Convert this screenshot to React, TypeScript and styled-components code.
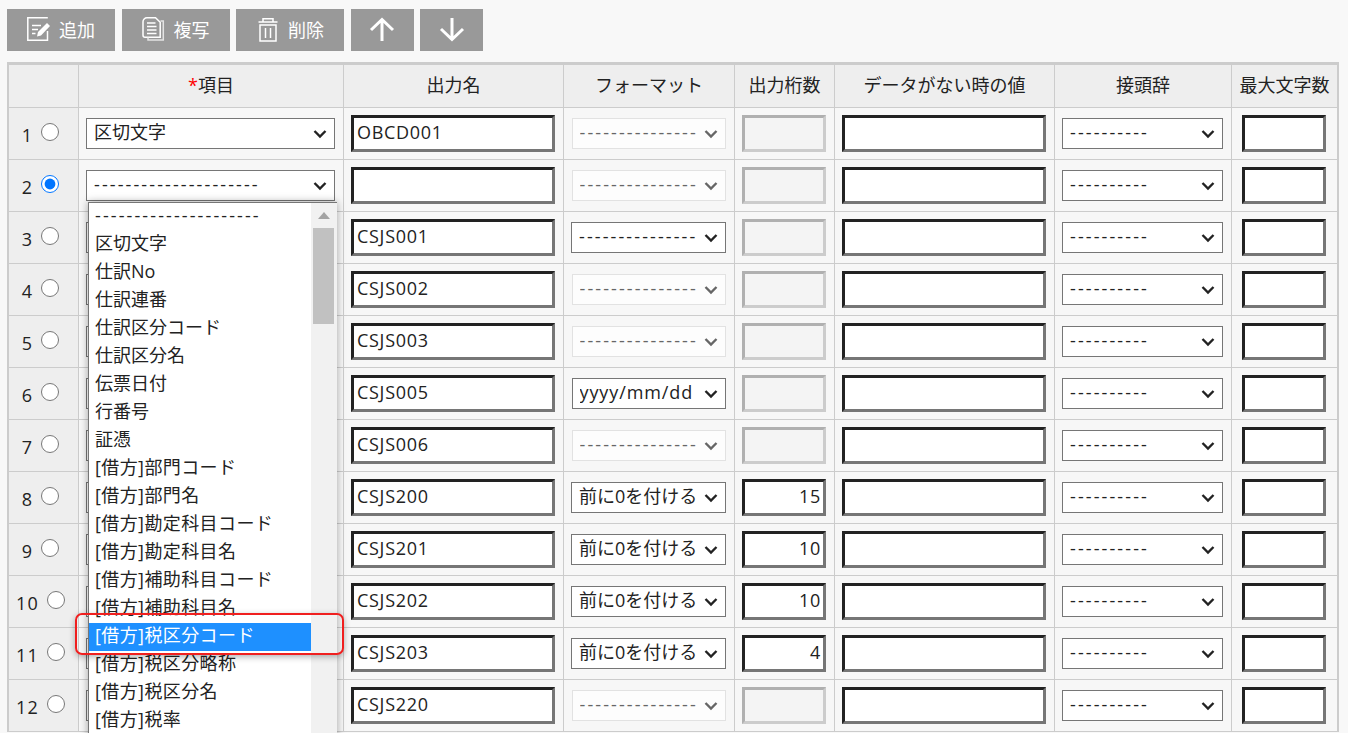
import React, { FC } from "react";
import styled, { createGlobalStyle } from "styled-components";

const FONT = `"Open Sans", "Noto Sans CJK JP", sans-serif`;

const chevron = (color: string) =>
  `url("data:image/svg+xml,%3Csvg xmlns='http://www.w3.org/2000/svg' width='14' height='10'%3E%3Cpath d='M1.500 2L7 7.500 12.500 2' fill='none' stroke='${color}' stroke-width='2.400'/%3E%3C/svg%3E")`;

const GlobalStyle = createGlobalStyle`
  html, body {
    margin: 0;
    height: 733px;
    overflow: hidden;
    background: #f8f8f8;
    font-family: ${FONT};
  }
`;

const Page = styled.div`
  position: relative;
  box-sizing: border-box;
  width: 1348px;
  height: 733px;
  padding: 9px 0 0 7px;
  overflow: hidden;
  color: #222;
  font-size: 18px;
`;

const Toolbar = styled.div`
  display: flex;
  gap: 6.5px;
  margin-bottom: 11px;
`;

const ToolButton = styled.button`
  display: flex;
  align-items: center;
  gap: 8px;
  width: 108px;
  height: 42px;
  padding: 0 0 0 20px;
  border: 0;
  background: #999;
  color: #fff;
  font-family: ${FONT};
  font-size: 18px;
`;

const ArrowButton = styled(ToolButton)`
  justify-content: center;
  width: 63px;
  padding: 0;
`;

const ButtonLabel = styled.span`
  position: relative;
  top: -1px;
`;

const Grid = styled.table`
  border-collapse: separate;
  border-spacing: 0;
  table-layout: fixed;
  width: 1332px;
  border-style: solid;
  border-color: #ccc;
  border-width: 3px 2px 0 2px;
`;

const Head = styled.th`
  height: 43px;
  padding: 0 0 5px;
  box-sizing: border-box;
  background: #eee;
  border-right: 1px solid #ccc;
  border-bottom: 1px solid #ccc;
  font-weight: 400;
  font-size: 18px;
  text-align: center;
  &:last-child {
    border-right: 0;
  }
`;

const Required = styled.span`
  color: #f00;
`;

const Cell = styled.td<{ $number?: boolean }>`
  height: 51px;
  padding: 0 1px 0 0;
  background: ${(p) => (p.$number ? "#eee" : "#f7f7f7")};
  border-right: 1px solid #ccc;
  border-bottom: 1px solid #ccc;
  &:last-child {
    border-right: 0;
  }
`;

const RowLabel = styled.label`
  display: flex;
  align-items: center;
  justify-content: center;
  gap: 8px;
  padding-right: 5px;
  line-height: 18px;
`;

const RowNumber = styled.span`
  padding-top: 3px;
  letter-spacing: 1.2px;
`;

const Radio = styled.input`
  width: 18px;
  height: 18px;
  margin: 0 0 3px;
`;

const Select = styled.select<{ $width: number; $spacing?: number }>`
  display: block;
  box-sizing: border-box;
  width: ${(p) => p.$width}px;
  height: 31px;
  margin: 0 auto;
  padding: 0 24px 3px 7px;
  appearance: none;
  background: #fff ${chevron("%23222")} no-repeat right 7px center;
  border: 1px solid #767676;
  border-radius: 0;
  color: #222;
  font-family: ${FONT};
  font-size: 18px;
  letter-spacing: ${(p) => p.$spacing ?? 0}px;
  &:disabled {
    opacity: 1;
    background-color: #fdfdfd;
    background-image: ${chevron("%23666")};
    border-color: #e2e2e2;
    color: #666;
  }
`;

const TextBox = styled.input<{ $width: number; $right?: boolean }>`
  display: block;
  box-sizing: border-box;
  width: ${(p) => p.$width}px;
  height: 37px;
  margin: 0 auto;
  padding: 0 2px 3px 3px;
  background: #fff;
  border-style: solid;
  border-width: 3px;
  border-color: #222 #767676 #767676 #222;
  border-radius: 0;
  color: #222;
  font-family: ${FONT};
  font-size: 18px;
  letter-spacing: 0.7px;
  text-align: ${(p) => (p.$right ? "right" : "left")};
  &:disabled {
    background: #f4f4f4;
    border-color: #b0b0b0 #ccc #ccc #b0b0b0;
  }
`;

const Dropdown = styled.div`
  position: absolute;
  left: 88px;
  top: 202px;
  display: flex;
  width: 249px;
  height: 540px;
  box-sizing: border-box;
  background: #fff;
  border: 1px solid #767676;
  border-right: 0;
  box-shadow: 0 0 8px rgba(0, 0, 0, 0.35);
`;

const OptionList = styled.ul`
  flex: 1;
  margin: 0;
  padding: 0;
  list-style: none;
`;

const Option = styled.li<{ $active?: boolean; $spacing: number }>`
  height: 28px;
  padding-left: 6px;
  line-height: 25px;
  white-space: nowrap;
  background: ${(p) => (p.$active ? "#1e90ff" : "transparent")};
  color: ${(p) => (p.$active ? "#fff" : "#222")};
  letter-spacing: ${(p) => p.$spacing}px;
`;

const ScrollTrack = styled.div`
  display: flex;
  flex-direction: column;
  align-items: center;
  width: 26px;
  padding-right: 1px;
  box-sizing: border-box;
  background: #f1f1f1;
`;

const ScrollArrow = styled.div`
  width: 0;
  height: 0;
  margin-top: 9px;
  border-left: 6px solid transparent;
  border-right: 6px solid transparent;
  border-bottom: 7px solid #a3a3a3;
`;

const ScrollThumb = styled.div`
  width: 21px;
  height: 96px;
  margin-top: 9px;
  background: #c1c1c1;
`;

const Callout = styled.div`
  position: absolute;
  left: 75px;
  top: 613px;
  width: 269px;
  height: 42px;
  box-sizing: border-box;
  border: 2px solid #f01f1f;
  border-radius: 7px;
  box-shadow: 0 2px 6px rgba(0, 0, 0, 0.3);
`;

const EditIcon: FC = () => (
  <svg width="24" height="26" viewBox="0 0 24 26" fill="none" stroke="#fff" strokeWidth="1.500">
    <path d="M20.500 14v9.200H.8V.8h20" />
    <path d="M5 8.500h9M5 12.500h6M5 16.500h3.500" strokeWidth="1.400" />
    <path d="M10 19.500l1-4.500 9-9 3 3-9 9.500z" fill="#fff" stroke="none" />
  </svg>
);

const CopyIcon: FC = () => (
  <svg width="24" height="26" viewBox="0 0 24 26" fill="none" stroke="#fff" strokeWidth="1.500">
    <path d="M5 .8h8.500l4.700 4.500v15H3a2 2 0 0 1-2-2V4.800a4 4 0 0 1 4-4z" />
    <path d="M18.500 4h2.800v19H6v-2.500" stroke="#e4e4e4" />
    <path d="M5 6h8.500M5 9.500h9.500M5 13h9.500M5 16.500h9.500" strokeWidth="1.300" />
  </svg>
);

const TrashIcon: FC = () => (
  <svg width="24" height="26" viewBox="0 0 24 26" fill="none" stroke="#fff" strokeWidth="1.500">
    <path d="M2.500 5h19M7 4.500V1.800h10v2.700" />
    <path d="M4 8h16v16H4z" />
    <path d="M9.500 11v10M14.500 11v10" />
  </svg>
);

const UpIcon: FC = () => (
  <svg width="26" height="26" viewBox="0 0 26 26" fill="none" stroke="#fff" strokeWidth="3">
    <path d="M13 24V2.500M2 13L13 2.500 24 13" />
  </svg>
);

const DownIcon: FC = () => (
  <svg width="26" height="26" viewBox="0 0 26 26" fill="none" stroke="#fff" strokeWidth="3">
    <path d="M13 1v21.500M2 12l11 10.500L24 12" />
  </svg>
);

const DASH_ITEM = "---------------------";
const DASH_FORMAT = "---------------";
const DASH_PREFIX = "----------";
const DASH_SPACING = 2.1;
const ZERO = "前に0を付ける";
const DATE = "yyyy/mm/dd";

const OPTIONS = [
  DASH_ITEM,
  "区切文字",
  "仕訳No",
  "仕訳連番",
  "仕訳区分コード",
  "仕訳区分名",
  "伝票日付",
  "行番号",
  "証憑",
  "[借方]部門コード",
  "[借方]部門名",
  "[借方]勘定科目コード",
  "[借方]勘定科目名",
  "[借方]補助科目コード",
  "[借方]補助科目名",
  "[借方]税区分コード",
  "[借方]税区分略称",
  "[借方]税区分名",
  "[借方]税率",
];

interface Row {
  item: string;
  name: string;
  format: string;
  formatOn?: boolean;
  digits?: string;
}

const ROWS: Row[] = [
  { item: "区切文字", name: "OBCD001", format: DASH_FORMAT },
  { item: DASH_ITEM, name: "", format: DASH_FORMAT },
  { item: "仕訳No", name: "CSJS001", format: DASH_FORMAT, formatOn: true },
  { item: "仕訳連番", name: "CSJS002", format: DASH_FORMAT },
  { item: "仕訳区分コード", name: "CSJS003", format: DASH_FORMAT },
  { item: "伝票日付", name: "CSJS005", format: DATE, formatOn: true },
  { item: "行番号", name: "CSJS006", format: DASH_FORMAT },
  { item: "[借方]部門コード", name: "CSJS200", format: ZERO, formatOn: true, digits: "15" },
  { item: "[借方]部門名", name: "CSJS201", format: ZERO, formatOn: true, digits: "10" },
  { item: "[借方]勘定科目コード", name: "CSJS202", format: ZERO, formatOn: true, digits: "10" },
  { item: "[借方]勘定科目名", name: "CSJS203", format: ZERO, formatOn: true, digits: "4" },
  { item: "[借方]税率", name: "CSJS220", format: DASH_FORMAT },
];

const COLUMNS = [70, 265, 220, 171, 100, 220, 177, 105];

// yyyy/mm/dd sits in a slightly narrower box than the other enabled selects
const formatWidth = (row: Row) => (row.format === DATE || !row.formatOn ? 154 : 155);

const optionSpacing = (option: string) => {
  if (option === DASH_ITEM) return DASH_SPACING;
  return option.startsWith("[") ? 0.4 : 0;
};

const App: FC = () => {
  return (
    <Page>
      <GlobalStyle />
      <Toolbar>
        <ToolButton>
          <EditIcon />
          <ButtonLabel>追加</ButtonLabel>
        </ToolButton>
        <ToolButton>
          <CopyIcon />
          <ButtonLabel>複写</ButtonLabel>
        </ToolButton>
        <ToolButton>
          <TrashIcon />
          <ButtonLabel>削除</ButtonLabel>
        </ToolButton>
        <ArrowButton aria-label="上へ">
          <UpIcon />
        </ArrowButton>
        <ArrowButton aria-label="下へ">
          <DownIcon />
        </ArrowButton>
      </Toolbar>

      <Grid>
        <colgroup>
          {COLUMNS.map((width, i) => (
            <col key={i} width={width} />
          ))}
        </colgroup>
        <thead>
          <tr>
            <Head />
            <Head>
              <Required>*</Required>項目
            </Head>
            <Head>出力名</Head>
            <Head>フォーマット</Head>
            <Head>出力桁数</Head>
            <Head>データがない時の値</Head>
            <Head>接頭辞</Head>
            <Head>最大文字数</Head>
          </tr>
        </thead>
        <tbody>
          {ROWS.map((row, i) => (
            <tr key={i}>
              <Cell $number>
                <RowLabel>
                  <RowNumber>{i + 1}</RowNumber>
                  <Radio type="radio" name="row" defaultChecked={i === 1} />
                </RowLabel>
              </Cell>
              <Cell>
                <Select $width={249} $spacing={optionSpacing(row.item)} defaultValue={row.item}>
                  {OPTIONS.map((option) => (
                    <option key={option}>{option}</option>
                  ))}
                </Select>
              </Cell>
              <Cell>
                <TextBox $width={204} defaultValue={row.name} />
              </Cell>
              <Cell>
                <Select
                  $width={formatWidth(row)}
                  $spacing={row.format === DASH_FORMAT ? DASH_SPACING : row.format === DATE ? 0.9 : 0}
                  defaultValue={row.format}
                  disabled={!row.formatOn}
                >
                  <option>{DASH_FORMAT}</option>
                  <option>{ZERO}</option>
                  <option>{DATE}</option>
                </Select>
              </Cell>
              <Cell>
                <TextBox $width={84} $right defaultValue={row.digits} disabled={!row.digits} />
              </Cell>
              <Cell>
                <TextBox $width={204} />
              </Cell>
              <Cell>
                <Select $width={161} $spacing={DASH_SPACING} defaultValue={DASH_PREFIX}>
                  <option>{DASH_PREFIX}</option>
                </Select>
              </Cell>
              <Cell>
                <TextBox $width={84} />
              </Cell>
            </tr>
          ))}
        </tbody>
      </Grid>

      <Dropdown>
        <OptionList>
          {OPTIONS.map((option, i) => (
            <Option key={option} $active={i === 15} $spacing={optionSpacing(option)}>
              {option}
            </Option>
          ))}
        </OptionList>
        <ScrollTrack>
          <ScrollArrow />
          <ScrollThumb />
        </ScrollTrack>
      </Dropdown>
      <Callout />
    </Page>
  );
};

export default App;
